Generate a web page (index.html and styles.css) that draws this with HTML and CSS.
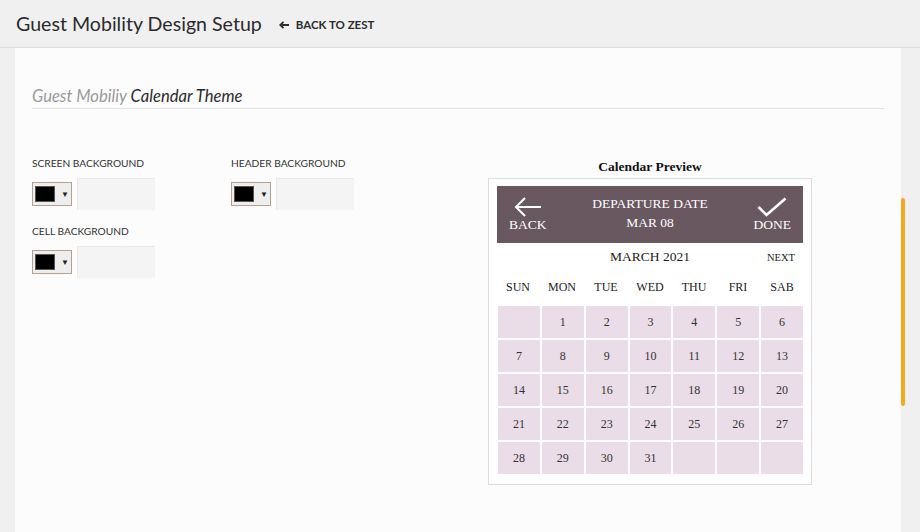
FILE: index.html
```html
<!DOCTYPE html>
<html lang="en">
<head>
    <meta charset="UTF-8">
    <meta name="viewport" content="width=device-width, initial-scale=1.0">
    <title>Guest Mobility Design Setup</title>
    <link rel="stylesheet" href="styles.css">
</head>
<body>
  <header class="topbar">
    <h1 class="page-title">Guest Mobility Design Setup</h1>
    <a href="#" class="back-link">
      <svg class="back-arrow" width="10" height="8" viewBox="0 0 10 8"><path d="M10 4H3M4.5 0.8L1.2 4l3.3 3.2" fill="none" stroke="#2b2b2b" stroke-width="1.8"/></svg>
      BACK TO ZEST
    </a>
  </header>

  <div class="panel">
    <h2 class="section-title"><span class="muted">Guest Mobiliy</span> Calendar Theme</h2>

    <div class="theme-row">
      <!-- colour fields -->
      <div class="fields">
        <div class="field">
          <label>SCREEN BACKGROUND</label>
          <div class="picker-row">
            <div class="picker"><span class="swatch"></span><span class="caret">&#9660;</span></div>
            <input type="text" class="color-input">
          </div>
        </div>
        <div class="field">
          <label>HEADER BACKGROUND</label>
          <div class="picker-row">
            <div class="picker"><span class="swatch"></span><span class="caret">&#9660;</span></div>
            <input type="text" class="color-input">
          </div>
        </div>
        <div class="field">
          <label>CELL BACKGROUND</label>
          <div class="picker-row">
            <div class="picker"><span class="swatch"></span><span class="caret">&#9660;</span></div>
            <input type="text" class="color-input">
          </div>
        </div>
      </div>

      <!-- calendar preview -->
      <div class="preview">
        <div class="preview-title">Calendar Preview</div>
        <div class="preview-box">
          <div class="cal-header">
            <div class="cal-btn">
              <svg width="28" height="20" viewBox="0 0 28 20"><path d="M27 10H2M11 1L2 10l9 9" fill="none" stroke="#fff" stroke-width="2"/></svg>
              <span>BACK</span>
            </div>
            <div class="cal-date">
              <div>DEPARTURE DATE</div>
              <div>MAR 08</div>
            </div>
            <div class="cal-btn">
              <svg width="30" height="20" viewBox="0 0 30 20"><path d="M1.5 10l8 8L28.5 1.5" fill="none" stroke="#fff" stroke-width="2.6"/></svg>
              <span>DONE</span>
            </div>
          </div>
          <div class="month-row">
            <span class="month">MARCH 2021</span>
            <span class="next">NEXT</span>
          </div>
          <div class="days">
            <span>SUN</span><span>MON</span><span>TUE</span><span>WED</span><span>THU</span><span>FRI</span><span>SAB</span>
          </div>
          <div class="cal-grid" id="calGrid"></div>
        </div>
      </div>
    </div>
  </div>

  <div class="scroll-thumb"></div>

  <script>
    // March 2021 starts on a Monday
    const grid = document.getElementById("calGrid");
    for (let i = 0; i < 35; i++) {
      const cell = document.createElement("div");
      cell.className = "cell";
      cell.textContent = i >= 1 && i <= 31 ? i : "";
      grid.appendChild(cell);
    }
  </script>
</body>
</html>
```

FILE: styles.css
```css
body {
    margin: 0;
    padding: 0;
    background-color: #f0f0f0;
    font-family: 'Lato', sans-serif;
    color: #333;
    height: 532px;
    overflow: hidden;
}

.topbar {
    display: flex;
    align-items: center;
    height: 47px;
    padding: 0 16px;
    border-bottom: 1px solid #dedede;
}

.page-title {
    margin: 0;
    font-size: 19.6px;
    font-weight: normal;
    color: #2b2b2b;
}

.back-link {
    margin-left: 17px;
    display: flex;
    align-items: center;
    text-decoration: none;
    color: #2b2b2b;
    font-size: 11.5px;
    font-weight: bold;
    padding-top: 2px;
}

.back-arrow {
    margin-right: 7px;
}

.panel {
    margin-left: 15px;
    width: 852px;
    padding: 36px 17px 0;
    background-color: #fcfcfc;
    height: 448px;
}

.section-title {
    margin: 0;
    font-size: 16.6px;
    font-style: italic;
    font-weight: normal;
    line-height: 24px;
    color: #2b2b2b;
    border-bottom: 1px solid #e2e2e2;
}

.section-title .muted {
    color: #9a9a9a;
}

.theme-row {
    display: flex;
    margin-top: 47px;
}

.fields {
    width: 456px;
    display: grid;
    grid-template-columns: 199px 199px;
    align-content: start;
    row-gap: 14px;
}

.field label {
    display: block;
    font-size: 10.2px;
    line-height: 14px;
    color: #333;
    margin-bottom: 8px;
}

.picker-row {
    display: flex;
    align-items: center;
    gap: 5px;
    height: 32px;
}

.picker {
    width: 36px;
    height: 22px;
    border: 1px solid #b3a08e;
    background-color: #eeeeee;
    display: flex;
    align-items: center;
    padding-left: 2px;
    box-sizing: content-box;
}

.swatch {
    width: 20px;
    height: 16px;
    background-color: #000;
    border: 1px solid #555;
    box-sizing: border-box;
}

.caret {
    font-size: 8px;
    margin-left: 6px;
    color: #222;
}

.color-input {
    width: 78px;
    height: 32px;
    box-sizing: border-box;
    border: none;
    border-top: 1px solid #e9e9e9;
    border-left: 1px solid #e9e9e9;
    background-color: #f4f4f4;
    margin: 0;
    padding: 0;
}

.preview {
    width: 324px;
    padding-top: 3px;
    font-family: 'Liberation Serif', serif;
}

.preview-title {
    text-align: center;
    font-weight: bold;
    font-size: 13.5px;
    line-height: 16px;
    color: #111;
    margin-bottom: 3px;
}

.preview-box {
    border: 1px solid #dcdcdc;
    padding: 7px 8px 10px;
    background-color: #fff;
}

.cal-header {
    background-color: #6a5860;
    color: #fff;
    height: 57px;
    display: flex;
    align-items: center;
    justify-content: space-between;
    padding: 0 12px 0 12px;
    font-size: 13.5px;
}

.cal-btn {
    display: flex;
    flex-direction: column;
    align-items: center;
    line-height: 16px;
}

.cal-date {
    text-align: center;
    line-height: 19px;
    padding-bottom: 4px;
}

.month-row {
    position: relative;
    height: 28px;
    display: flex;
    align-items: center;
    justify-content: center;
    font-size: 13.5px;
    color: #222;
}

.next {
    position: absolute;
    right: 8px;
    font-size: 10.5px;
}

.days {
    display: grid;
    grid-template-columns: repeat(7, 1fr);
    column-gap: 2px;
    height: 32px;
    align-items: center;
    text-align: center;
    font-size: 12px;
    color: #222;
    margin-bottom: 3px;
}

.cal-grid {
    display: grid;
    grid-template-columns: repeat(7, 1fr);
    gap: 2px;
    padding-left: 1px;
}

.cell {
    height: 32px;
    line-height: 32px;
    text-align: center;
    background-color: #eadde7;
    font-size: 12px;
    color: #333;
}

.scroll-thumb {
    position: fixed;
    left: 901px;
    top: 198px;
    width: 4px;
    height: 208px;
    border-radius: 2px;
    background-color: #f7a81b;
}
```
